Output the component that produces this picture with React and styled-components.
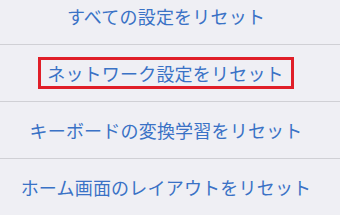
import styled, { createGlobalStyle } from "styled-components";

const Global = createGlobalStyle`
  html, body {
    margin: 0;
    padding: 0;
    background: #efeff4;
    overflow: hidden;
  }
`;

const Page = styled.div`
  width: 340px;
  height: 215px;
  overflow: hidden;
  background: #efeff4;
  font-family: "Noto Sans CJK JP", "Noto Sans", sans-serif;
`;

const List = styled.ul`
  list-style: none;
  margin: -12px 0 0;
  padding: 0;
`;

const Row = styled.li`
  height: 56px;
  display: flex;
  align-items: center;
  justify-content: center;
  padding-right: 8px;
  border-bottom: 1px solid #d0d0d5;
`;

const Label = styled.span`
  font-size: 18px;
  line-height: 20px;
  letter-spacing: 0.2px;
  color: #3a72c6;
  padding: ${(p) => (p.$marked ? "3px 7px 3px 6px" : "0")};
  border: ${(p) => (p.$marked ? "3.5px solid #e01e28" : "none")};
`;

const items = [
  "すべての設定をリセット",
  "ネットワーク設定をリセット",
  "キーボードの変換学習をリセット",
  "ホーム画面のレイアウトをリセット",
];

export default function App() {
  return (
    <Page>
      <Global />
      <List>
        {items.map((t, i) => (
          <Row key={t}>
            <Label $marked={i === 1}>{t}</Label>
          </Row>
        ))}
      </List>
    </Page>
  );
}
